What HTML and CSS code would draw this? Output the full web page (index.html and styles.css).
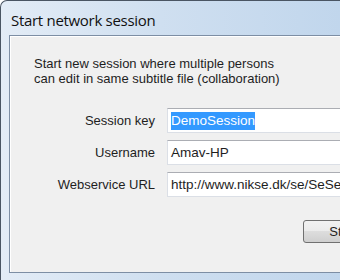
FILE: index.html
```html
<!DOCTYPE html>
<html>
<head>
    <title>Start network session</title>
    <meta name="viewport" content="width=device-width, initial-scale=1.0">
    <link rel="stylesheet" href="styles.css">
</head>
<body>
    <div class="window">
        <div class="titlebar">Start network session</div>
        <div class="client">
            <p class="intro">Start new session where multiple persons<br>can edit in same subtitle file (collaboration)</p>

            <div class="form">
                <label for="sessionKey">Session key</label>
                <div class="field"><span class="selected">DemoSession</span></div>

                <label for="userName">Username</label>
                <div class="field">Amav-HP</div>

                <label for="webUrl">Webservice URL</label>
                <div class="field">http://www.nikse.dk/se/SeService.asmx</div>
            </div>

            <div class="buttons">
                <button class="btn">Start</button>
            </div>
        </div>
    </div>
</body>
</html>
```

FILE: styles.css
```css
* {
    margin: 0;
    padding: 0;
    box-sizing: border-box;
}

html, body {
    width: 340px;
    height: 280px;
    overflow: hidden;
}

body {
    font-family: "Liberation Sans", Arial, sans-serif;
    font-size: 13px;
    color: #1e1e1e;
    background: #fff;
}

/* fenetre facon Windows 7 */
.window {
    width: 400px;
    height: 280px;
    padding: 0 0 7px 8px;
    border-top: 1px solid #4a5563;
    border-left: 1px solid #4a5563;
    border-top-left-radius: 7px;
    background: linear-gradient(to right, #e3ecf6 0%, #cfdff0 40%, #bcd3eb 100%);
    display: flex;
    flex-direction: column;
}

.titlebar {
    height: 34px;
    padding: 9px 0 0 2px;
    font-family: "Open Sans", "Noto Sans", sans-serif;
    font-size: 15px;
    color: #111;
    letter-spacing: -0.3px;
}

.client {
    flex: 1;
    background: #f0f0f0;
    border: 1px solid #7d8ea4;
    box-shadow: inset 1px 1px 0 #ffffff;
    padding: 20px 0 0 24px;
}

.intro {
    line-height: 15px;
    margin-bottom: 22px;
}

.form {
    display: grid;
    grid-template-columns: 121px 240px;
    column-gap: 12px;
    row-gap: 7px;
    align-items: center;
}

.form label {
    text-align: right;
}

.field {
    height: 25px;
    background: #fff;
    border: 1px solid #dbdfe6;
    border-top-color: #abadb3;
    padding: 4px 0 0 3px;
    font-size: 13.5px;
    white-space: nowrap;
    overflow: hidden;
}

.selected {
    background: #3399ff;
    color: #fff;
    padding: 1px 0 2px;
}

.buttons {
    display: flex;
    padding: 23px 0 0 269px;
}

.btn {
    width: 80px;
    height: 23px;
    font-family: inherit;
    font-size: 13px;
    color: #1e1e1e;
    border: 1px solid #707070;
    border-radius: 3px;
    background: linear-gradient(#f2f2f2 0%, #ebebeb 49%, #dddddd 50%, #cfcfcf 100%);
}
```
